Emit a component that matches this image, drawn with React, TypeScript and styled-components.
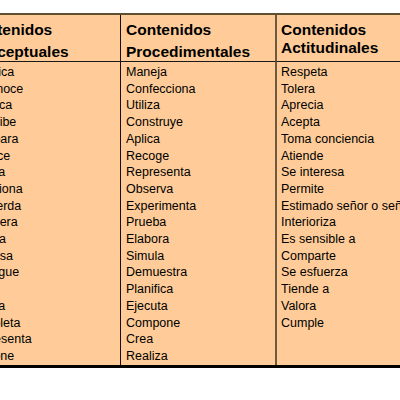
import styled, { createGlobalStyle } from "styled-components";

const GlobalStyle = createGlobalStyle`
  html, body {
    margin: 0;
    padding: 0;
    background: #ffffff;
    overflow: hidden;
  }
  body {
    font-family: "Liberation Sans", Arial, sans-serif;
    color: #000000;
  }
`;

const Page = styled.div`
  width: 400px;
  height: 400px;
  overflow: hidden;
  padding-top: 13px;
  box-sizing: border-box;
`;

const Table = styled.div`
  margin-left: -36px;
  width: 470px;
  background: #ffcc99;
  border-top: 2px solid #5e5030;
  border-bottom: 3px solid #000000;
  display: grid;
  grid-template-columns: 156px 155px 159px;
`;

type Divider = "dark" | "brown";

const dividerRule = (d?: Divider) =>
  d === "dark" ? "1px solid #111111" : d === "brown" ? "2px solid #6e5a3c" : "none";

const sidePad = (d?: Divider) => (d === "brown" ? "4px" : d === "dark" ? "5px" : "3px");

const HeadCell = styled.div<{ $tight?: boolean; $divider?: Divider }>`
  padding: ${({ $tight }) => ($tight ? "6px" : "4px")} ${({ $divider }) => sidePad($divider)} 0;
  height: 47px;
  box-sizing: border-box;
  border-bottom: 1px solid #1a1a1a;
  border-left: ${({ $divider }) => dividerRule($divider)};
  font-size: 15.5px;
  font-weight: bold;
  line-height: ${({ $tight }) => ($tight ? "18px" : "22px")};
  white-space: nowrap;
`;

const BodyCell = styled.div<{ $divider?: Divider }>`
  padding: 2px ${({ $divider }) => sidePad($divider)} 0;
  border-left: ${({ $divider }) => dividerRule($divider)};
  font-size: 12.5px;
  line-height: 16.7px;
  white-space: nowrap;
`;

const Item = styled.div``;

const conceptuales = [
  "Clasifica",
  "Reconoce",
  "Justifica",
  "Describe",
  "Compara",
  "Conoce",
  "Indaga",
  "Relaciona",
  "Recuerda",
  "Enumera",
  "Señala",
  "Expresa",
  "Distingue",
  "Cita",
  "Evalúa",
  "Completa",
  "Representa",
  "Propone",
];

const procedimentales = [
  "Maneja",
  "Confecciona",
  "Utiliza",
  "Construye",
  "Aplica",
  "Recoge",
  "Representa",
  "Observa",
  "Experimenta",
  "Prueba",
  "Elabora",
  "Simula",
  "Demuestra",
  "Planifica",
  "Ejecuta",
  "Compone",
  "Crea",
  "Realiza",
];

const actitudinales = [
  "Respeta",
  "Tolera",
  "Aprecia",
  "Acepta",
  "Toma conciencia",
  "Atiende",
  "Se interesa",
  "Permite",
  "Estimado señor o señora",
  "Interioriza",
  "Es sensible a",
  "Comparte",
  "Se esfuerza",
  "Tiende a",
  "Valora",
  "Cumple",
];

export default function App() {
  return (
    <Page>
      <GlobalStyle />
      <Table>
        <HeadCell>
          Contenidos
          <br />
          Conceptuales
        </HeadCell>
        <HeadCell $divider="dark">
          Contenidos
          <br />
          Procedimentales
        </HeadCell>
        <HeadCell $divider="brown" $tight>
          Contenidos
          <br />
          Actitudinales
        </HeadCell>

        <BodyCell>
          {conceptuales.map((w) => (
            <Item key={w}>{w}</Item>
          ))}
        </BodyCell>
        <BodyCell $divider="dark">
          {procedimentales.map((w) => (
            <Item key={w}>{w}</Item>
          ))}
        </BodyCell>
        <BodyCell $divider="brown">
          {actitudinales.map((w) => (
            <Item key={w}>{w}</Item>
          ))}
        </BodyCell>
      </Table>
    </Page>
  );
}
